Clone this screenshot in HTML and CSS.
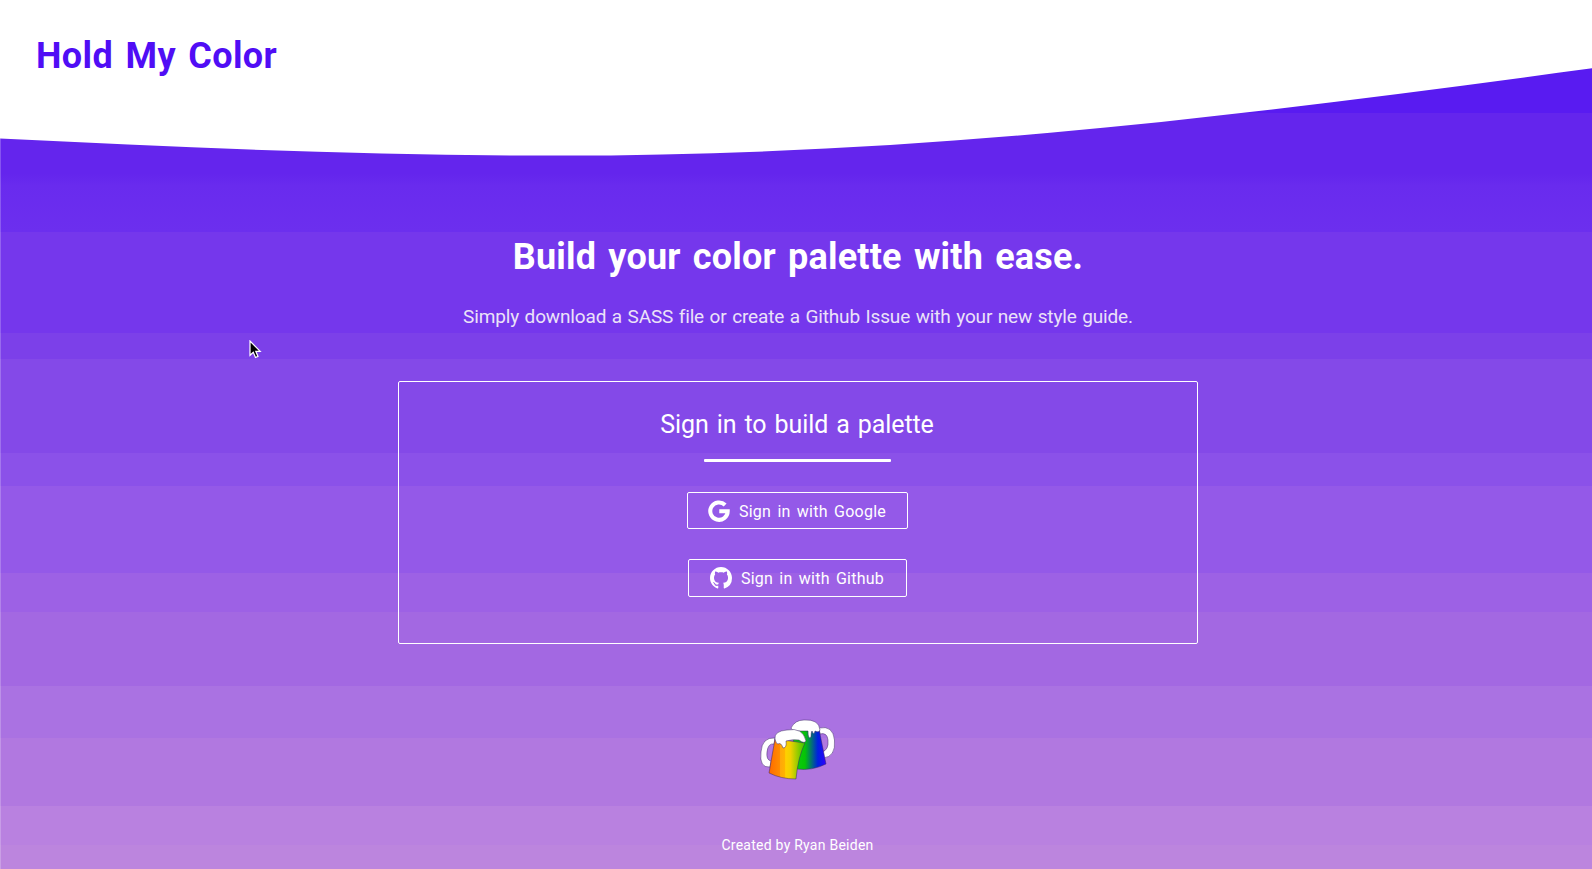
FILE: index.html
```html
<!DOCTYPE html>
<html lang="en">
<head>
<meta charset="utf-8">
<title>Hold My Color</title>
<link rel="stylesheet" href="styles.css">
</head>
<body>
<div class="page">
  <svg class="wave" viewBox="0 0 1592 160" aria-hidden="true"><path fill="#fff" d="M0 0H1592V68.3C1411 92.8 1231 116.4 1050 132.7C887 147.4 723 155.6 560 155.6C373 155.6 187 147.8 0 138.5Z"/></svg>
  <header class="header"><h1 class="brand">Hold My Color</h1></header>
  <main class="main">
    <h2 class="headline">Build your color palette with ease.</h2>
    <p class="lead">Simply download a SASS file or create a Github Issue with your new style guide.</p>
    <section class="card">
      <h3 class="card-title">Sign in to build a palette</h3>
      <div class="rule"></div>
      <a class="button google">
        <svg class="icon" viewBox="0 0 24 24"><path fill="none" stroke="#fff" stroke-width="4.400" d="M18.700 5.400A9.500 9.500 0 1 0 21.500 12.200H12.300"/></svg>
        <span>Sign in with Google</span>
      </a>
      <a class="button github">
        <svg class="icon" viewBox="0 0 16 16"><path fill="#fff" d="M8 0C3.58 0 0 3.58 0 8c0 3.54 2.29 6.53 5.47 7.59.4.07.55-.17.55-.38 0-.19-.01-.82-.01-1.49-2.01.37-2.53-.49-2.69-.94-.09-.23-.48-.94-.82-1.13-.28-.15-.68-.52-.01-.53.63-.01 1.08.58 1.23.82.72 1.21 1.87.87 2.33.66.07-.52.28-.87.51-1.07-1.78-.2-3.64-.89-3.64-3.95 0-.87.31-1.59.82-2.15-.08-.2-.36-1.02.08-2.12 0 0 .67-.21 2.2.82.64-.18 1.32-.27 2-.27s1.36.09 2 .27c1.53-1.04 2.2-.82 2.2-.82.44 1.1.16 1.92.08 2.12.51.56.82 1.27.82 2.15 0 3.07-1.87 3.75-3.65 3.95.29.25.54.73.54 1.48 0 1.07-.01 1.93-.01 2.2 0 .21.15.46.55.38A8.01 8.01 0 0 0 16 8c0-4.42-3.58-8-8-8z"/></svg>
        <span>Sign in with Github</span>
      </a>
    </section>
  </main>
  <footer class="footer">
    <svg class="mugs" viewBox="0 0 76 62">
      <defs>
        <linearGradient id="warm"><stop offset="0" stop-color="#ff6a00"/><stop offset=".3" stop-color="#ff8c00"/><stop offset=".31" stop-color="#ffa60a"/><stop offset=".45" stop-color="#ffb400"/><stop offset=".46" stop-color="#ffd000"/><stop offset=".6" stop-color="#f0d000"/><stop offset="1" stop-color="#35c800"/></linearGradient>
        <linearGradient id="cool"><stop offset="0" stop-color="#10d010"/><stop offset=".38" stop-color="#06c406"/><stop offset=".76" stop-color="#0020e0"/><stop offset="1" stop-color="#3000ff"/></linearGradient>
      </defs>
      <g stroke="#3d2866" stroke-width=".5" stroke-linejoin="round">
        <path fill="#fff" d="M59 9Q73 6 74.500 21Q76 38 63 39L62 33Q69 31 68 21Q67 13 60 15Z"/>
        <path fill="url(#cool)" d="M32 12L59 10L66 45Q52 52 37 50Z"/>
        <path fill="#fff" d="M31 9Q35 1 44 1Q59 0 60 11Q59 14 55 12Q54 17 52 12Q51 13 51 18Q48 21 48 12L40 12Q32 12 31 9Z"/>
        <path fill="#fff" d="M15 19Q2 18 1 33Q-1 49 10 48L11 42Q6 41 7 33Q8 24 14 25Z"/>
        <path fill="url(#warm)" d="M15 20L45 24Q38 38 36 60Q21 60 9 54Z"/>
        <path fill="#fff" d="M15 20Q14 12 27 11Q43 8 46 22Q44 25 39 21Q33 20 26 22Q27 29 23 29Q21 23 18 25Q16 25 15 20Z"/>
      </g>
    </svg>
    <p class="credit">Created by Ryan Beiden</p>
  </footer>
  <svg class="cursor" viewBox="0 0 13 20"><path fill="#000" stroke="#fff" stroke-width="1.200" d="M1 1V15.300L4.300 12.200L6.500 17.500L9 16.400L6.800 11.300H11.200Z"/></svg>
</div>
</body>
</html>
```
FILE: styles.css
```css
* { box-sizing: border-box; }
html, body { margin: 0; height: 100%; overflow: hidden; }
body { font-family: Roboto, "Liberation Sans", sans-serif; color: #fff; }
h1, h2, h3, p { margin: 0; white-space: nowrap; }
.page {
  position: relative;
  height: 869px;
  display: flex;
  flex-direction: column;
  box-shadow: inset 1px 0 rgba(255, 255, 255, .22);
  background: linear-gradient(#591bf1 0 113px, #6425ed 113px 174px, #692bee 186px, #6c2fee 232px, #7537ec 232px 333px, #7c40e9 333px 359px, #8449e8 359px 453px, #8b51e9 453px 486px, #9459e8 486px 573px, #9d61e5 573px 612px, #a368e2 612px 686px, #aa72e2 686px 738px, #b178e0 738px 806px, #b981e0 806px 845px, #bc85de 845px);
}
.wave { position: absolute; inset: 0 0 auto 0; width: 1592px; height: 160px; }
.header { position: relative; height: 231px; padding: 34px 0 0 36px; }
.brand { font-size: 36px; line-height: 44px; color: #500df5; letter-spacing: .4px; word-spacing: 3px; }
.main { display: flex; flex-direction: column; align-items: center; padding-left: 4px; }
.headline { font-size: 36px; line-height: 52px; letter-spacing: .2px; word-spacing: 3px; }
.lead { font-size: 19px; line-height: 30px; margin-top: 19px; color: #ebe2f8; letter-spacing: -.15px; word-spacing: 1px; }
.card { width: 800px; height: 263px; margin-top: 49px; padding-right: 2px; border: 1px solid #fff; border-radius: 2px; display: flex; flex-direction: column; align-items: center; }
.card-title { font-size: 25px; line-height: 36px; margin-top: 25px; font-weight: 400; letter-spacing: -.1px; word-spacing: 2px; }
.rule { width: 187px; height: 3px; margin-top: 16px; background: #fff; border-radius: 1px; }
.button { display: flex; align-items: center; justify-content: center; gap: 9px; border: 1px solid #fff; border-radius: 2px; font-size: 16px; letter-spacing: .25px; word-spacing: 2px; }
.button span { padding-top: 1px; white-space: nowrap; }
.google { width: 221px; height: 37px; margin-top: 30px; }
.github { width: 219px; height: 38px; margin-top: 30px; }
.icon { width: 22px; height: 22px; flex: none; }
.footer { display: flex; flex-direction: column; align-items: center; padding: 75px 0 0 3px; }
.mugs { width: 76px; height: 62px; }
.credit { margin-top: 54px; font-size: 14px; line-height: 20px; letter-spacing: .25px; }
.cursor { position: absolute; left: 249px; top: 340px; width: 13px; height: 20px; }
```
